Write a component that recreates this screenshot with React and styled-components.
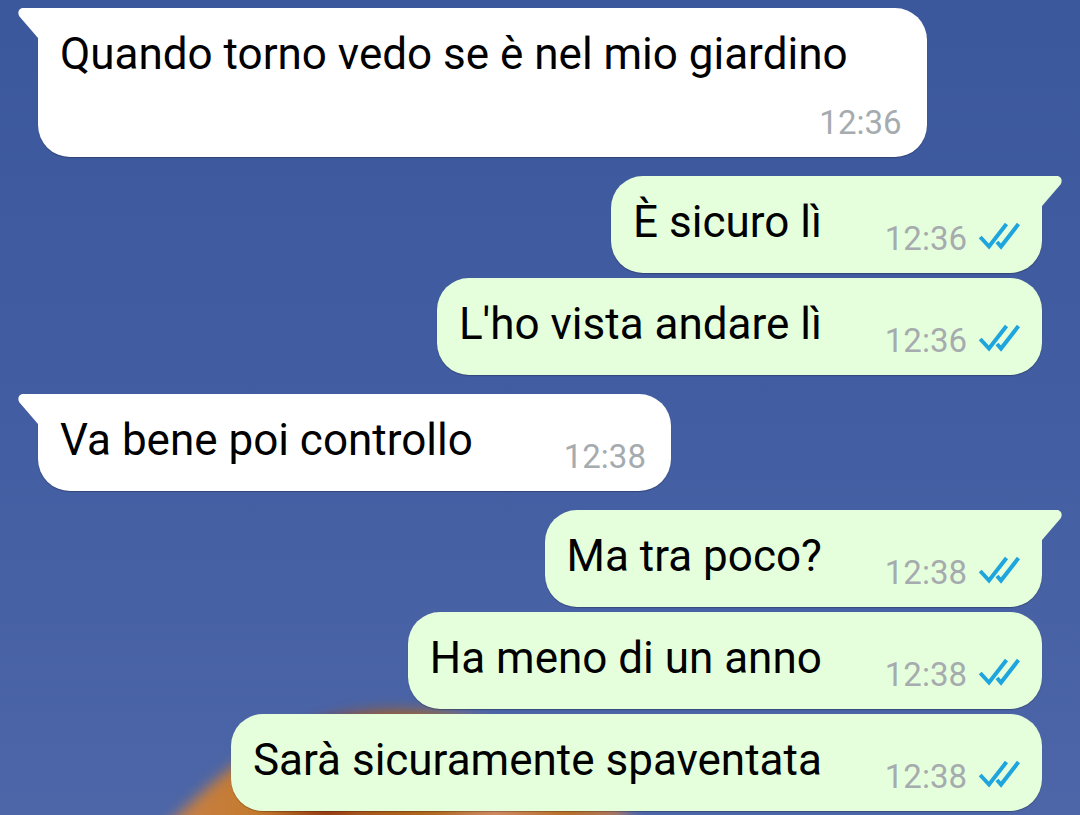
import React from "react";
import styled, { createGlobalStyle } from "styled-components";

const messages = [
  { id: 1, text: "Quando torno vedo se è nel mio giardino", time: "12:36", first: true, wrapped: true },
  { id: 2, text: "È sicuro lì", time: "12:36", mine: true, first: true },
  { id: 3, text: "L'ho vista andare lì", time: "12:36", mine: true },
  { id: 4, text: "Va bene poi controllo", time: "12:38", first: true },
  { id: 5, text: "Ma tra poco?", time: "12:38", mine: true, first: true },
  { id: 6, text: "Ha meno di un anno", time: "12:38", mine: true },
  { id: 7, text: "Sarà sicuramente spaventata", time: "12:38", mine: true },
];

const Tail = ({ mine }) => (
  <TailSvg $mine={mine} width="21" height="32" viewBox="0 0 21 32" aria-hidden="true">
    <path d="M21 0H5C0.800 0 -1 5 1.500 8.500L20 30H21Z" />
  </TailSvg>
);

const Ticks = () => (
  <TicksSvg width="42" height="34" viewBox="0 0 42 34" role="img" aria-label="Letto">
    <path d="M2.200 15L11 24.500L28.500 2M19 20L23 24.500L40.500 2" />
  </TicksSvg>
);

const Wallpaper = () => (
  <WallpaperSvg viewBox="0 0 1080 815" preserveAspectRatio="xMidYMax slice" aria-hidden="true">
    <defs>
      <linearGradient id="sky" x1="0" y1="0" x2="0" y2="1">
        <stop offset="0" stopColor="#3c589c" />
        <stop offset="0.5" stopColor="#425da1" />
        <stop offset="1" stopColor="#4c66a8" />
      </linearGradient>
      <linearGradient id="fur" gradientUnits="userSpaceOnUse" x1="150" y1="0" x2="640" y2="0">
        <stop offset="0" stopColor="#c98250" />
        <stop offset="0.22" stopColor="#c47a2c" />
        <stop offset="0.36" stopColor="#963c12" />
        <stop offset="0.43" stopColor="#a8561c" />
        <stop offset="0.58" stopColor="#b06a20" />
        <stop offset="0.7" stopColor="#d08a62" />
        <stop offset="0.85" stopColor="#b87028" />
        <stop offset="1" stopColor="#a87a80" />
      </linearGradient>
      <filter id="soft" x="-10%" y="-20%" width="120%" height="140%">
        <feGaussianBlur stdDeviation="7" />
      </filter>
    </defs>
    <rect width="1080" height="815" fill="url(#sky)" />
    <path
      d="M150 840C200 800 260 714 390 711C520 708 600 780 650 840Z"
      fill="url(#fur)"
      filter="url(#soft)"
    />
  </WallpaperSvg>
);

const App = () => {
  return <Chat>
    <GlobalStyle />
    <Wallpaper />
    <List>
      {messages.map((m) => (
        <Row key={m.id} $mine={m.mine} $first={m.first}>
          <Bubble $mine={m.mine} $first={m.first} $wrapped={m.wrapped}>
            {m.first && <Tail mine={m.mine} />}
            <Text $mine={m.mine} $wrapped={m.wrapped}>{m.text}</Text>
            <Meta>
              <Time>{m.time}</Time>
              {m.mine && <Ticks />}
            </Meta>
          </Bubble>
        </Row>
      ))}
    </List>
  </Chat>;
};

const GlobalStyle = createGlobalStyle`
  body {
    margin: 0;
    background: #425da1;
    font-family: Roboto, "Liberation Sans", sans-serif;
  }
`;

const Chat = styled.main`
  position: relative;
  min-height: 100vh;
  overflow: hidden;
`;

const WallpaperSvg = styled.svg`
  position: absolute;
  top: 0;
  left: 0;
  width: 100%;
  height: 100%;
`;

const List = styled.ul`
  position: relative;
  margin: 0;
  padding: 8px 38px 4px;
  list-style: none;
`;

const Row = styled.li`
  display: flex;
  justify-content: ${(p) => (p.$mine ? "flex-end" : "flex-start")};
  margin-top: ${(p) => (p.$first ? 19 : 5)}px;

  &:first-child {
    margin-top: 0;
  }
`;

const Bubble = styled.div`
  position: relative;
  display: flex;
  flex-direction: ${(p) => (p.$wrapped ? "column" : "row")};
  align-items: flex-end;
  justify-content: space-between;
  box-sizing: border-box;
  min-height: 97px;
  padding: 20px ${(p) => (p.$mine ? 22 : 25)}px 14px 22px;
  border-radius: 32px;
  border-top-left-radius: ${(p) => (p.$first && !p.$mine ? 0 : 32)}px;
  border-top-right-radius: ${(p) => (p.$first && p.$mine ? 0 : 32)}px;
  background: ${(p) => (p.$mine ? "#e5ffdc" : "#fff")};
  box-shadow: 0 1px 1px rgba(0, 0, 0, 0.25);
`;

const TailSvg = styled.svg`
  position: absolute;
  top: 0;
  ${(p) => (p.$mine ? "right: -20px; transform: scaleX(-1);" : "left: -20px;")}
  fill: ${(p) => (p.$mine ? "#e5ffdc" : "#fff")};
`;

const Text = styled.span`
  align-self: flex-start;
  margin-right: ${(p) => (p.$wrapped ? 54 : p.$mine ? 63 : 91)}px;
  margin-bottom: ${(p) => (p.$wrapped ? 23 : 0)}px;
  font-size: 44px;
  line-height: 52px;
  color: #000;
`;

const Meta = styled.span`
  display: flex;
  align-items: center;
  gap: 11px;
`;

const Time = styled.time`
  font-size: 33px;
  line-height: 40px;
  color: #a5abae;
`;

const TicksSvg = styled.svg`
  fill: none;
  stroke: #1fa5dd;
  stroke-width: 4;
`;

export default App;
